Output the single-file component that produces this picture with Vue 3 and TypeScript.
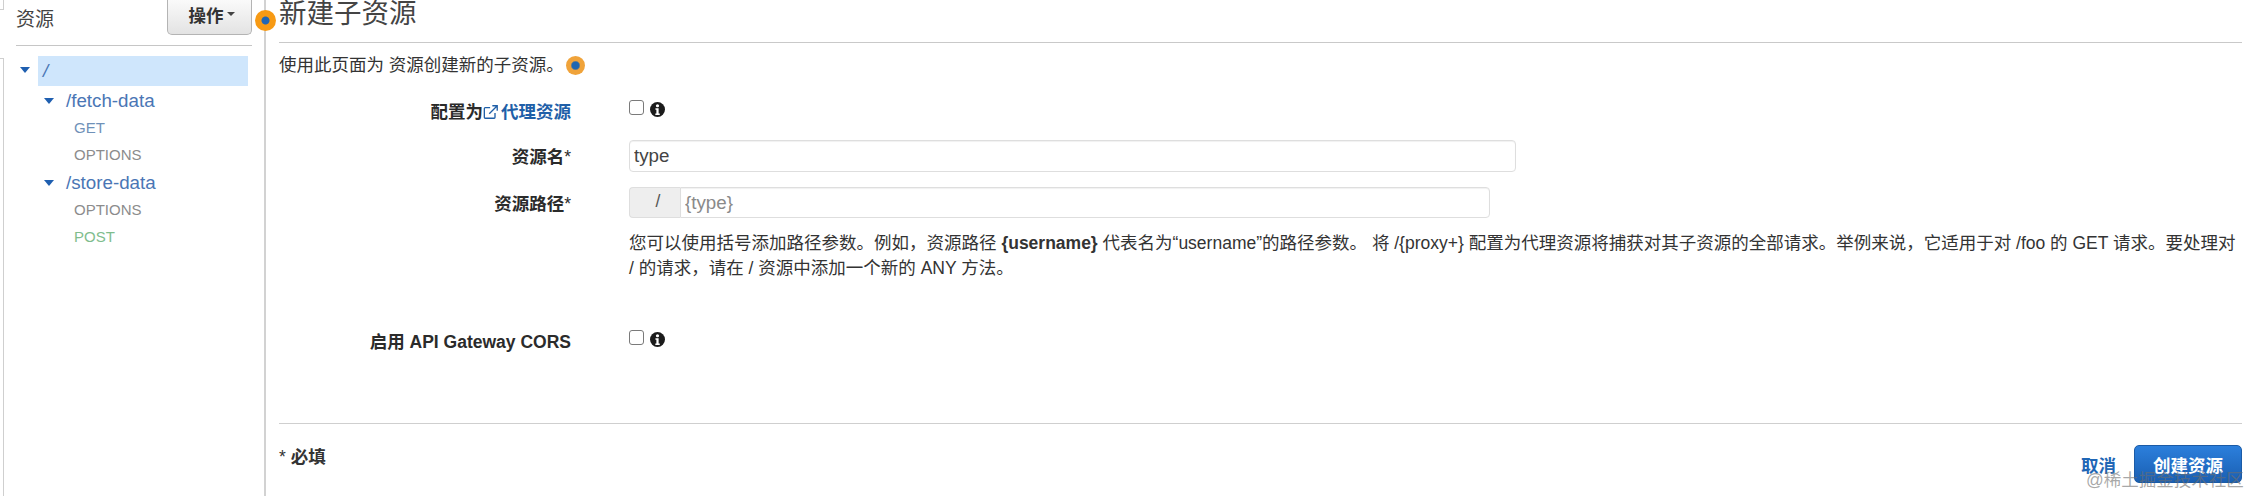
<script setup lang="ts">
interface Node { label: string; kind: 'root' | 'res' | 'get' | 'options' | 'post' }
const tree: Node[] = [
  { label: '/', kind: 'root' },
  { label: '/fetch-data', kind: 'res' },
  { label: 'GET', kind: 'get' },
  { label: 'OPTIONS', kind: 'options' },
  { label: '/store-data', kind: 'res' },
  { label: 'OPTIONS', kind: 'options' },
  { label: 'POST', kind: 'post' },
]
</script>

<template>
  <div class="page">
    <i class="edge edge-top"></i>
    <i class="edge edge-bottom"></i>
    <aside class="side">
      <div class="side-head">
        <span class="side-title">资源</span>
        <button class="actions" type="button">操作<i class="caret"></i></button>
      </div>
      <ul class="tree">
        <li v-for="(n, i) in tree" :key="i" class="node" :class="n.kind">
          <i v-if="n.kind === 'root' || n.kind === 'res'" class="tri"></i>
          <span class="node-label">{{ n.label }}</span>
        </li>
      </ul>
    </aside>
    <span class="dot dot-main"></span>
    <main class="main">
      <h1 class="title">新建子资源</h1>
      <p class="desc">使用此页面为 资源创建新的子资源。<span class="dot dot-inline"></span></p>

      <div class="row row-proxy">
        <label class="label">配置为<a class="proxy">
          <svg class="ext" viewBox="0 0 18 18" fill="none" stroke="currentColor" stroke-width="1.5">
            <path d="M8 4H2.5a1 1 0 0 0-1 1v10a1 1 0 0 0 1 1h10a1 1 0 0 0 1-1v-5" />
            <path d="M7 11 15.5 2.5M10.5 2h5.5v5.5" />
          </svg>代理资源</a></label>
        <div class="ctl check-line">
          <input class="check" type="checkbox" />
          <svg class="info" viewBox="0 0 16 16"><circle cx="8" cy="8" r="8" fill="#1b1b1b" /><circle cx="8" cy="4" r="1.7" fill="#fff" /><path d="M5.8 6.6h3.4v5.6h1.2v1.6H5.7v-1.6h1.1V8.2h-1z" fill="#fff" /></svg>
        </div>
      </div>

      <div class="row row-name">
        <label class="label">资源名<span class="star">*</span></label>
        <div class="ctl"><input class="text name-input" type="text" value="type" /></div>
      </div>

      <div class="row row-path">
        <label class="label">资源路径<span class="star">*</span></label>
        <div class="ctl">
          <div class="group">
            <span class="addon">/</span>
            <input class="text path-input" type="text" placeholder="{type}" />
          </div>
          <p class="help">您可以使用括号添加路径参数。例如，资源路径 <b>{username}</b> 代表名为“username”的路径参数。 将 /{proxy+} 配置为代理资源将捕获对其子资源的全部请求。举例来说，它适用于对 /foo 的 GET 请求。要处理对<br />/ 的请求，请在 / 资源中添加一个新的 ANY 方法。</p>
        </div>
      </div>

      <div class="row row-cors">
        <label class="label">启用 API Gateway CORS</label>
        <div class="ctl check-line">
          <input class="check" type="checkbox" />
          <svg class="info" viewBox="0 0 16 16"><circle cx="8" cy="8" r="8" fill="#1b1b1b" /><circle cx="8" cy="4" r="1.7" fill="#fff" /><path d="M5.8 6.6h3.4v5.6h1.2v1.6H5.7v-1.6h1.1V8.2h-1z" fill="#fff" /></svg>
        </div>
      </div>

      <footer class="foot">
        <span class="required"><span class="req-star">*</span> 必填</span>
        <div class="foot-actions">
          <a class="cancel">取消</a>
          <button class="primary" type="button">创建资源</button>
        </div>
      </footer>
    </main>
    <span class="watermark">@稀土掘金技术社区</span>
  </div>
</template>

<style>
html, body { margin: 0; padding: 0; background: #fff; }
</style>

<style scoped>
.page {
  position: relative;
  display: flex;
  width: 2252px;
  height: 496px;
  overflow: hidden;
  background: #fff;
  color: #333;
  font-family: "Liberation Sans", "Noto Sans CJK SC", sans-serif;
  font-size: 17.5px;
}
.edge { position: absolute; left: 0; width: 3px; border-right: 1px solid #cfcfcf; }
.edge-top { top: 0; height: 9px; border-bottom: 1px solid #cfcfcf; }
.edge-bottom { top: 58px; bottom: 0; border-top: 1px solid #cfcfcf; }

.side {
  box-sizing: border-box;
  flex: 0 0 266px;
  padding-left: 16px;
  padding-right: 12px;
  border-right: 2px solid #d2d2d2;
}
.side-head {
  display: flex;
  justify-content: space-between;
  height: 45px;
  border-bottom: 1px solid #c6c6c6;
}
.side-title { font-size: 19px; line-height: 40px; color: #444; }
.actions {
  box-sizing: border-box;
  display: flex;
  align-items: center;
  justify-content: center;
  gap: 3px;
  width: 85px;
  height: 35px;
  padding: 0 0 6px 4px;
  border: 1px solid #b4b4b4;
  border-top: 0;
  border-radius: 0 0 5px 5px;
  background: linear-gradient(#fafafa, #e3e3e3);
  color: #333;
  font: bold 17.5px "Liberation Sans", "Noto Sans CJK SC", sans-serif;
}
.caret { width: 0; height: 0; border: 4.5px solid transparent; border-top-color: #444; border-bottom: 0; }

.tree { list-style: none; margin: 10px 0 0; padding: 0; }
.node { position: relative; display: flex; align-items: center; box-sizing: border-box; }
.root { height: 30px; margin-left: 22px; margin-right: 4px; background: #cfe6fc; padding-left: 5px; font-size: 18.75px; color: #4a76b5; font-style: italic; }
.res { height: 28px; padding: 1px 0 0 50px; font-size: 18.75px; color: #4a76b5; }
.get, .options, .post { height: 27px; padding-left: 58px; font-size: 15px; }
.get { color: #6f91b8; }
.options { color: #8c8c8c; }
.post { color: #7fbd8d; }
.tri {
  position: absolute;
  width: 0;
  height: 0;
  border: 5.5px solid transparent;
  border-top: 6px solid #1f5fb0;
  border-bottom: 0;
  top: 50%;
  margin-top: -2px;
}
.root .tri { left: -18px; margin-top: -4px; }
.res .tri { left: 28px; }

.dot { display: block; border-radius: 50%; background: radial-gradient(circle, #1f66b5 0 3.5px, #f79a14 4.5px); }
.dot-main { position: absolute; left: 255px; top: 10px; width: 21px; height: 21px; }
.dot-inline {
  display: inline-block;
  width: 19px;
  height: 19px;
  margin-left: 2px;
  vertical-align: -4px;
  background: radial-gradient(circle, #1f66b0 0 3.5px, #f0a33a 5px);
}

.main { position: relative; flex: 1; padding: 0 10px 0 13px; min-width: 0; }
.title {
  height: 42px;
  margin: 0;
  border-bottom: 1px solid #c9c9c9;
  font-size: 27.5px;
  font-weight: 400;
  line-height: 27px;
  color: #444;
}
.desc { margin: 10px 0 0; height: 25px; line-height: 25px; }

.row { display: flex; }
.label {
  flex: 0 0 292px;
  text-align: right;
  font-weight: 700;
  color: #2b2b2b;
  white-space: nowrap;
}
.star { font-weight: 400; }
.ctl { margin-left: 58px; flex: 1; min-width: 0; }
.row-proxy { margin-top: 22px; line-height: 25px; height: 25px; }
.row-name { margin-top: 15px; line-height: 34px; }
.row-path { margin-top: 13px; line-height: 34px; }
.row-cors { margin-top: 49px; line-height: 25px; }

.proxy { color: #1f5fa8; }
.ext { width: 16px; height: 16px; margin: 0 2px 0 0; vertical-align: -2px; }

.check-line { display: flex; align-items: flex-start; padding-top: 0; }
.check {
  appearance: none;
  box-sizing: border-box;
  width: 15px;
  height: 15px;
  margin: 0;
  border: 1px solid #7a7a7a;
  border-radius: 3px;
  background: #fff;
}
.info { width: 15px; height: 15px; margin: 2px 0 0 6px; }

.text {
  box-sizing: border-box;
  display: block;
  border: 1px solid #dedede;
  border-radius: 4px;
  box-shadow: inset 0 1px 1px rgba(0, 0, 0, 0.06);
  background: #fff;
  color: #444;
  font: 18.75px "Liberation Sans", "Noto Sans CJK SC", sans-serif;
  outline: none;
}
.name-input { width: 887px; height: 32px; padding: 0 4px; }
.group { display: flex; width: 861px; height: 31px; }
.addon {
  box-sizing: border-box;
  flex: 0 0 51px;
  padding-left: 6px;
  border: 1px solid #dedede;
  border-right: 0;
  border-radius: 4px 0 0 4px;
  background: #eee;
  text-align: center;
  line-height: 26px;
  color: #555;
  font-size: 17.5px;
}
.path-input { flex: 1; min-width: 0; padding: 0 4px; border-radius: 0 4px 4px 0; }
.path-input::placeholder { color: #8a8a8a; opacity: 1; }
.help { margin: 13px 0 0; line-height: 25px; white-space: nowrap; }

.foot {
  position: relative;
  margin-top: 68px;
  border-top: 1px solid #cfcfcf;
  display: flex;
  justify-content: space-between;
  width: 1963px;
}
.required { margin-top: 21px; font-weight: 700; line-height: 25px; }
.req-star { font-weight: 400; }
.foot-actions { display: flex; align-items: center; gap: 18px; margin-top: 21px; }
.cancel { color: #1f66b5; font-weight: 700; }
.primary {
  box-sizing: border-box;
  width: 108px;
  height: 38px;
  padding: 0;
  border: 1px solid #1b5ba6;
  border-radius: 5px;
  background: linear-gradient(#2c7fdc, #1a5fb2);
  color: #fff;
  font: bold 17.5px "Liberation Sans", "Noto Sans CJK SC", sans-serif;
}
.watermark {
  position: absolute;
  left: 2086px;
  top: 468px;
  font-size: 17.5px;
  line-height: 24px;
  color: rgba(110, 110, 110, 0.6);
  white-space: nowrap;
}
</style>
